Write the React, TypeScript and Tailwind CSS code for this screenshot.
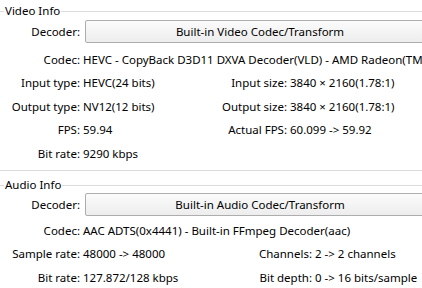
import React from "react";

const font = { fontFamily: '"Noto Sans", "Open Sans", sans-serif' };

function GroupHeader({ title, h }: { title: string; h: string }) {
  return (
    <div className={`flex items-start ${h}`}>
      <div className="mt-[11px] h-px w-[4px] bg-[#dcdcdc]" />
      <span className="mt-[3px] px-px leading-[16px]">{title}</span>
      <div className="mt-[11px] h-px flex-1 bg-[#dcdcdc]" />
    </div>
  );
}

function DecoderRow({ text }: { text: string }) {
  return (
    <div className="flex h-[23px] items-center">
      <span className="w-[80px] shrink-0 text-right">Decoder:</span>
      <div className="ml-[5px] flex h-[23px] w-[350px] shrink-0 items-center justify-center rounded-[2px] border border-[#adadad] bg-gradient-to-b from-[#fbfbfb] to-[#ededed]">
        {text}
      </div>
    </div>
  );
}

interface RowProps {
  label: string;
  value: string;
  rightLabel?: string;
  rightValue?: string;
  h: string;
  leftW?: string;
  rightW?: string;
}

function Row({ label, value, rightLabel, rightValue, h, leftW = "", rightW = "" }: RowProps) {
  return (
    <div className={`flex items-center ${h}`}>
      <span className="w-[80px] shrink-0 text-right">{label}</span>
      <span className={`shrink-0 pl-[3px] ${rightLabel ? leftW : ""}`}>{value}</span>
      {rightLabel && (
        <>
          <span className={`shrink-0 text-right ${rightW}`}>{rightLabel}</span>
          <span className="shrink-0 pl-[3px]">{rightValue}</span>
        </>
      )}
    </div>
  );
}

export default function App() {
  return (
    <div
      className="h-[288px] w-[422px] overflow-hidden whitespace-nowrap bg-white text-[11.5px] leading-[16px] text-black"
      style={font}
    >
      <section className="border-b border-[#dcdcdc] pb-[5px]">
        <GroupHeader title="Video Info" h="h-[20px]" />
        <DecoderRow text="Built-in Video Codec/Transform" />
        <div className="mt-[5px]">
          <Row h="h-[23px]" label="Codec:" value="HEVC - CopyBack D3D11 DXVA Decoder(VLD) - AMD Radeon(TM)" />
          <Row h="h-[24px]" leftW="w-[127px]" rightW="w-[80px]" label="Input type:" value="HEVC(24 bits)" rightLabel="Input size:" rightValue="3840 × 2160(1.78:1)" />
          <Row h="h-[23px]" leftW="w-[127px]" rightW="w-[80px]" label="Output type:" value="NV12(12 bits)" rightLabel="Output size:" rightValue="3840 × 2160(1.78:1)" />
          <Row h="h-[24px]" leftW="w-[127px]" rightW="w-[80px]" label="FPS:" value="59.94" rightLabel="Actual FPS:" rightValue="60.099 -> 59.92" />
          <Row h="h-[23px]" label="Bit rate:" value="9290 kbps" />
        </div>
      </section>
      <section className="mt-[3px]">
        <GroupHeader title="Audio Info" h="h-[19px]" />
        <DecoderRow text="Built-in Audio Codec/Transform" />
        <div className="mt-[3px]">
          <Row h="h-[23px]" label="Codec:" value="AAC ADTS(0x4441) - Built-in FFmpeg Decoder(aac)" />
          <Row h="h-[24px]" leftW="w-[147px]" rightW="w-[85px]" label="Sample rate:" value="48000 -> 48000" rightLabel="Channels:" rightValue="2 -> 2 channels" />
          <Row h="h-[23px]" leftW="w-[147px]" rightW="w-[85px]" label="Bit rate:" value="127.872/128 kbps" rightLabel="Bit depth:" rightValue="0 -> 16 bits/sample" />
        </div>
      </section>
    </div>
  );
}
